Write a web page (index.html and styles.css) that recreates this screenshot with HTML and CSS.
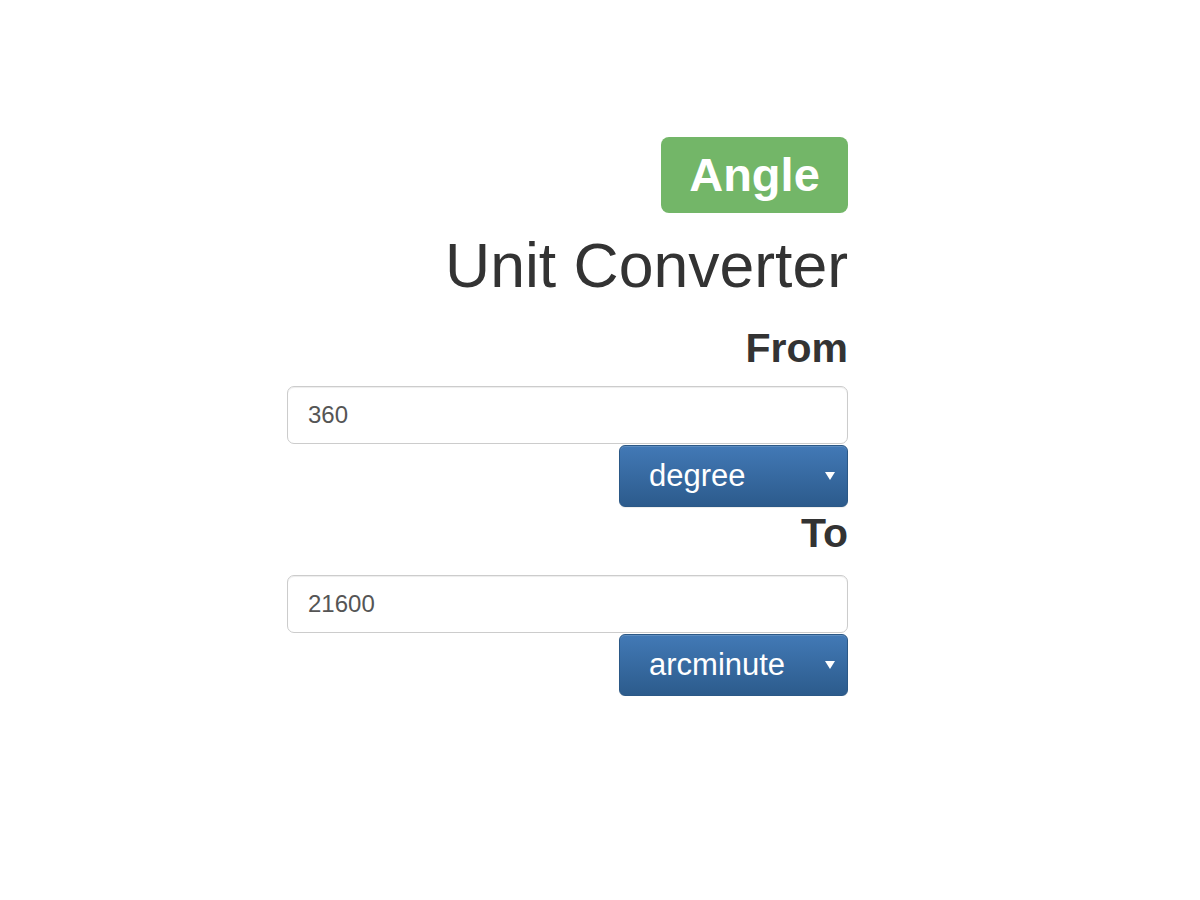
FILE: index.html
```html
<!DOCTYPE html>
<html lang="en">
<head>
<meta charset="utf-8">
<title>Unit Converter</title>
<link rel="stylesheet" href="styles.css">
</head>
<body>
<main class="converter">
  <div class="badge-row"><span class="badge">Angle</span></div>
  <h1 class="title">Unit Converter</h1>
  <section class="group group-from">
    <h2 class="group-label">From</h2>
    <input class="value-input" type="text" value="360">
    <div class="select-row">
      <button class="unit-select" type="button"><span class="unit-name">degree</span><span class="caret"></span></button>
    </div>
  </section>
  <section class="group group-to">
    <h2 class="group-label">To</h2>
    <input class="value-input" type="text" value="21600">
    <div class="select-row">
      <button class="unit-select" type="button"><span class="unit-name">arcminute</span><span class="caret"></span></button>
    </div>
  </section>
</main>
</body>
</html>
```
FILE: styles.css
```css
html, body {
  margin: 0;
  padding: 0;
  background: #ffffff;
}

body {
  font-family: "Liberation Sans", Arial, Helvetica, sans-serif;
  color: #333333;
}

.converter {
  width: 561px;
  margin: 0 0 0 287px;
  padding-top: 137px;
  display: flex;
  flex-direction: column;
  align-items: stretch;
}

.badge-row {
  display: flex;
  justify-content: flex-end;
}

.badge {
  display: inline-block;
  box-sizing: border-box;
  width: 187px;
  height: 76px;
  line-height: 76px;
  padding: 0;
  text-align: center;
  background: #73b668;
  color: #ffffff;
  font-size: 47px;
  font-weight: bold;
  border-radius: 8px;
}

.title {
  margin: 17px 0 0;
  text-align: right;
  font-size: 62.5px;
  line-height: 70px;
  font-weight: normal;
  color: #333333;
}

.group-label {
  margin: 0;
  text-align: right;
  font-size: 41px;
  line-height: 48px;
  font-weight: bold;
  color: #333333;
}

.group-from .group-label {
  margin-top: 24px;
  margin-bottom: 14px;
}

.group-to .group-label {
  margin-top: 2px;
  margin-bottom: 18px;
}

.value-input {
  display: block;
  box-sizing: border-box;
  width: 100%;
  height: 58px;
  margin: 0;
  padding: 0 20px;
  border: 1px solid #cccccc;
  border-radius: 7px;
  box-shadow: inset 0 1px 1px rgba(0, 0, 0, 0.075);
  font-family: "Liberation Sans", Arial, Helvetica, sans-serif;
  font-size: 24px;
  color: #555555;
  background: #ffffff;
  outline: none;
}

.select-row {
  display: flex;
  justify-content: flex-end;
  margin-top: 1px;
}

.unit-select {
  position: relative;
  display: flex;
  align-items: center;
  box-sizing: border-box;
  width: 229px;
  height: 62px;
  margin: 0;
  padding: 0 0 0 29px;
  border: 1px solid #2b5886;
  border-radius: 6px;
  background: linear-gradient(to bottom, #4279b6 0%, #2c5b8c 100%);
  box-shadow: inset 0 1px 0 rgba(255, 255, 255, 0.15), 0 1px 1px rgba(0, 0, 0, 0.075);
  color: #ffffff;
  font-family: "Liberation Sans", Arial, Helvetica, sans-serif;
  font-size: 31px;
  text-align: left;
  cursor: pointer;
}

.unit-name {
  flex: 1;
}

.caret {
  position: absolute;
  right: 12px;
  top: 50%;
  margin-top: -4px;
  width: 0;
  height: 0;
  border-top: 8px solid #ffffff;
  border-left: 5px solid transparent;
  border-right: 5px solid transparent;
}
```
